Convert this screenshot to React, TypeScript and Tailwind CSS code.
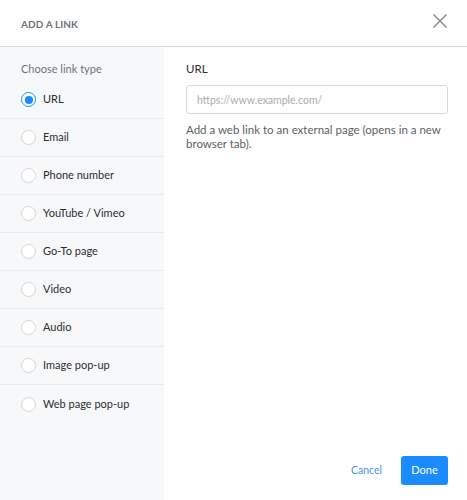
import { useState } from "react";

const linkTypes = [
  "URL",
  "Email",
  "Phone number",
  "YouTube / Vimeo",
  "Go-To page",
  "Video",
  "Audio",
  "Image pop-up",
  "Web page pop-up",
];

function Radio({ checked }: { checked: boolean }) {
  return checked ? (
    <span className="flex h-[15px] w-[15px] items-center justify-center rounded-full border-[1.5px] border-[#1a8cff] bg-white">
      <span className="h-[8px] w-[8px] rounded-full bg-[#1a8cff]" />
    </span>
  ) : (
    <span className="h-[15px] w-[15px] rounded-full border border-[#d3d6da] bg-white" />
  );
}

export default function App() {
  const [selected, setSelected] = useState("URL");

  return (
    <div
      className="flex h-[500px] w-[467px] flex-col bg-white text-[#2b2d30]"
      style={{ fontFamily: "Lato, 'Open Sans', Arial, sans-serif" }}
    >
      {/* Header */}
      <div className="flex h-[47px] shrink-0 items-center justify-between border-b border-[#d6dadd] pl-[21px] pr-[20px]">
        <span className="mt-[3px] text-[10px] font-bold tracking-[0.1px] text-[#6f7378]">ADD A LINK</span>
        <button className="mb-[4px] flex h-[14px] w-[14px] items-center justify-center text-[#7d8185]">
          <svg width="14" height="14" viewBox="0 0 14 14" fill="none" stroke="currentColor" strokeWidth="1.3">
            <path d="M0.5 0.5L13.5 13.5M13.5 0.5L0.5 13.5" />
          </svg>
        </button>
      </div>

      <div className="flex flex-1">
        {/* Sidebar */}
        <div className="flex w-[164px] shrink-0 flex-col bg-[#f7f8fa] pt-[13px]">
          <div className="mb-[3px] px-[21px] text-[11px] leading-[18px] text-[#6f7378]">Choose link type</div>
          {linkTypes.map((t) => (
            <button
              key={t}
              onClick={() => setSelected(t)}
              className="flex h-[38px] items-center gap-[7px] border-b border-[#e9ebee] px-[21px] text-left text-[11px] text-[#2b2d30] last:border-b-0"
            >
              <Radio checked={selected === t} />
              <span>{t}</span>
            </button>
          ))}
        </div>

        {/* Content */}
        <div className="flex flex-1 flex-col pb-[15px] pl-[22px] pr-[19px] pt-[13px]">
          <label className="mb-[7px] text-[11.5px] leading-[18px] text-[#2b2d30]">URL</label>
          <input
            placeholder="https://www.example.com/"
            className="h-[29px] w-full rounded-[3px] border border-[#d6dadd] px-[10px] text-[10.5px] text-[#2b2d30] outline-none placeholder:text-[#a9adb1]"
          />
          <p className="mt-[9px] text-[11.5px] leading-[14px] text-[#5b5f63]">
            Add a web link to an external page (opens in a new browser tab).
          </p>

          <div className="mt-auto flex items-center justify-end gap-[19px]">
            <button className="text-[10.5px] text-[#4d8ef0]">Cancel</button>
            <button className="h-[29px] w-[47px] rounded-[3px] bg-[#1a8cff] text-[11px] text-white">Done</button>
          </div>
        </div>
      </div>
    </div>
  );
}
